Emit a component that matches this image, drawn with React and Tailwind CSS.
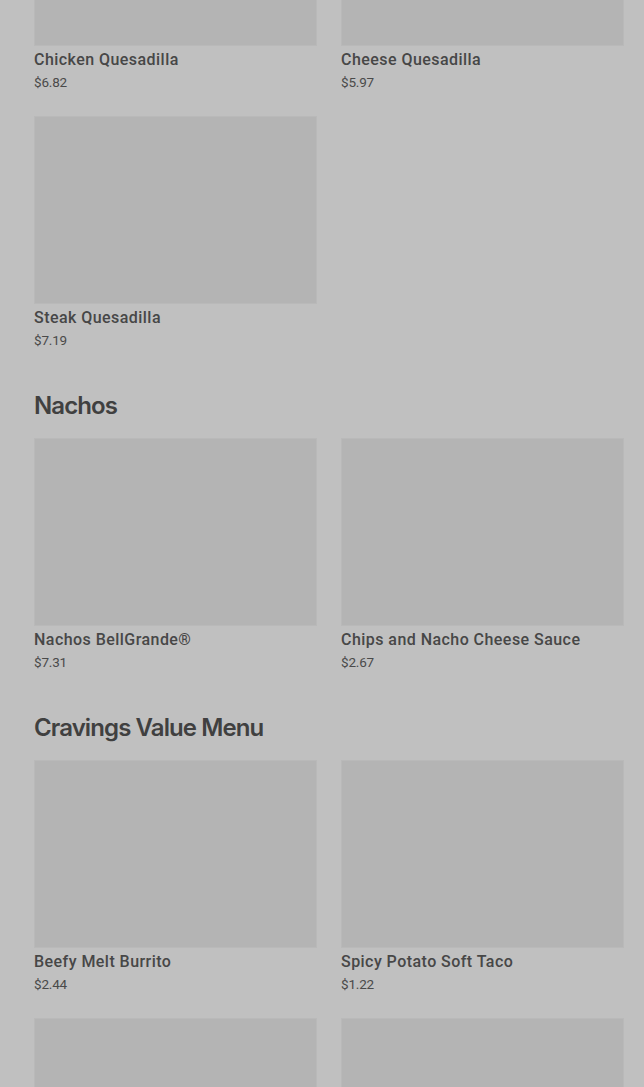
import React from "react";

const sections = [
  {
    title: null,
    items: [
      { name: "Chicken Quesadilla", price: "$6.82" },
      { name: "Cheese Quesadilla", price: "$5.97" },
      { name: "Steak Quesadilla", price: "$7.19" },
    ],
  },
  {
    title: "Nachos",
    items: [
      { name: "Nachos BellGrande®", price: "$7.31" },
      { name: "Chips and Nacho Cheese Sauce", price: "$2.67" },
    ],
  },
  {
    title: "Cravings Value Menu",
    items: [
      { name: "Beefy Melt Burrito", price: "$2.44" },
      { name: "Spicy Potato Soft Taco", price: "$1.22" },
      { name: "", price: "" },
      { name: "", price: "" },
    ],
  },
];

function Card({ item }) {
  return (
    <div className="flex flex-col">
      <div className="h-[188px] bg-[#b4b4b4] border border-[#b9b9b9]" />
      <div className="h-[24px] pt-[3px] text-[16px] leading-[21px] font-medium text-[#474747] tracking-[0.45px]" style={{ fontFamily: "Roboto, 'Liberation Sans', sans-serif" }}>
        {item.name}
      </div>
      <div className="h-[24px] text-[13.5px] leading-[24px] text-[#4a4a4a] tracking-[-0.2px]" style={{ fontFamily: "Roboto, 'Liberation Sans', sans-serif" }}>
        {item.price}
      </div>
    </div>
  );
}

export default function App() {
  return (
    <div className="min-h-[1087px] bg-[#c0c0c0] overflow-hidden">
      <div className="pl-[34px] pr-[20px] -mt-[142px] flex flex-col">
        {sections.map((s, i) => (
          <div key={i} className={i > 0 ? "mt-[37px]" : ""}>
            {s.title && (
              <h2 className="pt-[1px] h-[33px] text-[24px] leading-[32px] font-semibold text-[#404040] mb-[16px] tracking-[-0.9px]" style={{ fontFamily: "Inter, 'Liberation Sans', sans-serif" }}>
                {s.title}
              </h2>
            )}
            <div className="grid grid-cols-2 gap-x-[24px] gap-y-[22px]">
              {s.items.map((it, j) => (
                <Card key={j} item={it} />
              ))}
            </div>
          </div>
        ))}
      </div>
    </div>
  );
}
